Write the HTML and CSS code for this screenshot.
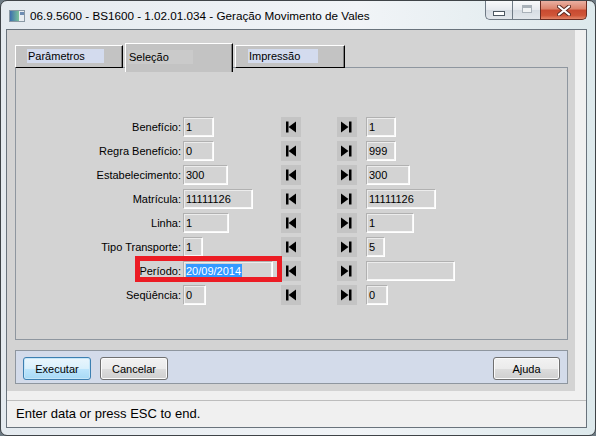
FILE: index.html
```html
<!DOCTYPE html>
<html lang="pt-BR">
<head>
    <meta charset="UTF-8">
    <title>Geração Movimento de Vales</title>
    <link rel="stylesheet" href="styles.css">
</head>
<body>

<div class="window">
    <div class="titlebar">
        <svg class="app-icon" width="16" height="12" viewBox="0 0 16 12">
            <defs>
                <linearGradient id="ico" x1="0" y1="0" x2="1" y2="0">
                    <stop offset="0" stop-color="#3d6fae"/>
                    <stop offset="1" stop-color="#7cc29a"/>
                </linearGradient>
            </defs>
            <rect x="0.5" y="0.5" width="15" height="11" fill="#e8edf1" stroke="#8a99a4"/>
            <rect x="1" y="1" width="9" height="10" fill="url(#ico)"/>
            <rect x="11" y="2" width="4" height="3" fill="#6d8db3"/>
        </svg>
        <span class="title">06.9.5600 - BS1600 - 1.02.01.034 - Geração Movimento de Vales</span>
        <div class="caption-btns">
            <div class="cap-btn cap-min"><span class="min-glyph"></span></div>
            <div class="cap-btn cap-max"><span class="max-glyph"></span></div>
            <div class="cap-btn cap-close">
                <svg width="14" height="11" viewBox="0 0 14 11">
                    <path d="M2 1.5 L12 9.5 M12 1.5 L2 9.5" stroke="#5a2a22" stroke-width="4" stroke-linecap="round"/>
                    <path d="M2 1.5 L12 9.5 M12 1.5 L2 9.5" stroke="#fff" stroke-width="2.2" stroke-linecap="round"/>
                </svg>
            </div>
        </div>
    </div>

    <div class="client">
        <div class="main">
            <div class="tabs">
                <div class="tab tab-param"><span class="tab-label">Parâmetros</span></div>
                <div class="tab active"><span class="tab-label">Seleção</span></div>
                <div class="tab tab-print"><span class="tab-label">Impressão</span></div>
            </div>

            <div class="panel">
                <div class="form">
                    <label>Benefício:</label>
                    <div><div class="field w31">1</div></div>
                    <div class="nav"><svg viewBox="0 0 20 20"><rect x="5" y="4.5" width="2.5" height="11"/><polygon points="15,4.5 7.5,10 15,15.5"/></svg></div>
                    <div class="nav"><svg viewBox="0 0 20 20"><polygon points="4,4.5 11.5,10 4,15.5"/><rect x="12" y="4.5" width="2.5" height="11"/></svg></div>
                    <div><div class="field w30">1</div></div>

                    <label>Regra Benefício:</label>
                    <div><div class="field w31">0</div></div>
                    <div class="nav"><svg viewBox="0 0 20 20"><rect x="5" y="4.5" width="2.5" height="11"/><polygon points="15,4.5 7.5,10 15,15.5"/></svg></div>
                    <div class="nav"><svg viewBox="0 0 20 20"><polygon points="4,4.5 11.5,10 4,15.5"/><rect x="12" y="4.5" width="2.5" height="11"/></svg></div>
                    <div><div class="field w30">999</div></div>

                    <label>Estabelecimento:</label>
                    <div><div class="field w45">300</div></div>
                    <div class="nav"><svg viewBox="0 0 20 20"><rect x="5" y="4.5" width="2.5" height="11"/><polygon points="15,4.5 7.5,10 15,15.5"/></svg></div>
                    <div class="nav"><svg viewBox="0 0 20 20"><polygon points="4,4.5 11.5,10 4,15.5"/><rect x="12" y="4.5" width="2.5" height="11"/></svg></div>
                    <div><div class="field w44">300</div></div>

                    <label>Matrícula:</label>
                    <div><div class="field w70">11111126</div></div>
                    <div class="nav"><svg viewBox="0 0 20 20"><rect x="5" y="4.5" width="2.5" height="11"/><polygon points="15,4.5 7.5,10 15,15.5"/></svg></div>
                    <div class="nav"><svg viewBox="0 0 20 20"><polygon points="4,4.5 11.5,10 4,15.5"/><rect x="12" y="4.5" width="2.5" height="11"/></svg></div>
                    <div><div class="field w70">11111126</div></div>

                    <label>Linha:</label>
                    <div><div class="field w46">1</div></div>
                    <div class="nav"><svg viewBox="0 0 20 20"><rect x="5" y="4.5" width="2.5" height="11"/><polygon points="15,4.5 7.5,10 15,15.5"/></svg></div>
                    <div class="nav"><svg viewBox="0 0 20 20"><polygon points="4,4.5 11.5,10 4,15.5"/><rect x="12" y="4.5" width="2.5" height="11"/></svg></div>
                    <div><div class="field w48">1</div></div>

                    <label>Tipo Transporte:</label>
                    <div><div class="field w20">1</div></div>
                    <div class="nav"><svg viewBox="0 0 20 20"><rect x="5" y="4.5" width="2.5" height="11"/><polygon points="15,4.5 7.5,10 15,15.5"/></svg></div>
                    <div class="nav"><svg viewBox="0 0 20 20"><polygon points="4,4.5 11.5,10 4,15.5"/><rect x="12" y="4.5" width="2.5" height="11"/></svg></div>
                    <div><div class="field w19">5</div></div>

                    <label>Período:</label>
                    <div><div class="field w90"><span class="selected">20/09/2014</span></div></div>
                    <div class="nav"><svg viewBox="0 0 20 20"><rect x="5" y="4.5" width="2.5" height="11"/><polygon points="15,4.5 7.5,10 15,15.5"/></svg></div>
                    <div class="nav"><svg viewBox="0 0 20 20"><polygon points="4,4.5 11.5,10 4,15.5"/><rect x="12" y="4.5" width="2.5" height="11"/></svg></div>
                    <div><div class="field w89"></div></div>

                    <label>Seqüência:</label>
                    <div><div class="field w23">0</div></div>
                    <div class="nav"><svg viewBox="0 0 20 20"><rect x="5" y="4.5" width="2.5" height="11"/><polygon points="15,4.5 7.5,10 15,15.5"/></svg></div>
                    <div class="nav"><svg viewBox="0 0 20 20"><polygon points="4,4.5 11.5,10 4,15.5"/><rect x="12" y="4.5" width="2.5" height="11"/></svg></div>
                    <div><div class="field w22">0</div></div>
                </div>

                <!-- red frame drawn over the Período row -->
                <div class="mark"></div>
            </div>

            <div class="button-bar">
                <button class="btn default">Executar</button>
                <button class="btn">Cancelar</button>
                <button class="btn help">Ajuda</button>
            </div>
        </div>

        <div class="statusbar">Enter data or press ESC to end.</div>
    </div>
</div>

</body>
</html>
```

FILE: styles.css
```css
* {
    box-sizing: border-box;
}
body {
    margin: 0;
    background: #6d7a83;
    font-family: "Liberation Sans", Arial, sans-serif;
    font-size: 11px;
    color: #000;
}
.window {
    width: 596px;
    height: 436px;
    border: 1px solid #3f4448;
    border-radius: 7px;
    background: linear-gradient(to right, #e4eaef, #f1f4f7 60%, #dde9ec);
    padding: 0 8px 7px 5px;
    display: flex;
    flex-direction: column;
}

/* title bar */
.titlebar {
    height: 28px;
    display: flex;
    align-items: flex-start;
}
.app-icon {
    margin: 9px 0 0 3px;
}
.title {
    margin: 8px 0 0 5px;
    font-size: 11.7px;
    line-height: 14px;
}
.caption-btns {
    margin-left: auto;
    display: flex;
    height: 19px;
}
.cap-btn {
    height: 19px;
    border: 1px solid #6f7a85;
    border-top: none;
    background: linear-gradient(#f8f9fb, #e6e9ee 50%, #d6dce3 50%, #e2e7ec);
    display: flex;
    align-items: center;
    justify-content: center;
}
.cap-min {
    width: 27px;
    border-right: none;
    border-radius: 0 0 0 5px;
}
.cap-max {
    width: 28px;
    border-right: none;
}
.cap-close {
    width: 47px;
    border-color: #6a2c22;
    border-radius: 0 0 5px 0;
    background: linear-gradient(#eab0a2, #dc826a 45%, #c84a31 50%, #cf5538 80%, #e3866a);
}
.min-glyph {
    width: 12px;
    height: 5px;
    margin-top: 6px;
    background: #fff;
    border: 1px solid #4d5862;
}
.max-glyph {
    width: 10px;
    height: 8px;
    margin-bottom: 2px;
    border: 1px solid #a9b1b9;
    box-shadow: inset 0 2px #a9b1b9;
    background: #f1f3f5;
}

/* client area */
.client {
    flex: 1;
    border: 1px solid #69737c;
    background: #f0f0f0;
    display: flex;
    flex-direction: column;
}
.main {
    width: 568px;
    height: 361px;
    background: #d3d3d3;
    padding: 13px 7px 7px 8px;
    display: flex;
    flex-direction: column;
}

/* tabs */
.tabs {
    display: flex;
    gap: 2px;
    height: 24px;
    align-items: flex-end;
    position: relative;
    z-index: 1;
}
.tab {
    width: 108px;
    height: 23px;
    margin-bottom: -1px;
    background: #c3c3c3;
    border-top: 1px solid #fff;
    border-left: 1px solid #fff;
    border-right: 1px solid #000;
    border-bottom: 1px solid #000;
    box-shadow: inset -1px 0 #808080;
    padding: 3px 0 0 11px;
}
.tab-label {
    display: block;
    height: 14px;
    line-height: 14px;
    padding-left: 1px;
    background: #d3dbee;
}
.tab-param .tab-label {
    width: 77px;
}
.tab.active {
    height: 29px;
    margin-bottom: -5px;
    border-bottom: none;
    padding: 6px 0 0 2px;
}
.tab.active .tab-label {
    width: 65px;
    background: #cacaca;
}
.tab-print {
    width: 110px;
    padding-left: 12px;
}
.tab-print .tab-label {
    width: 70px;
}

.panel {
    position: relative;
    height: 273px;
    border: 1px solid #8e969f;
    padding-top: 49px;
}

/* selection form */
.form {
    display: grid;
    grid-template-columns: 167px 98px 56px 29px 1fr;
    grid-auto-rows: 20px;
    row-gap: 4px;
}
.form label {
    text-align: right;
    padding-right: 2px;
    line-height: 20px;
}
.field {
    height: 20px;
    border: 1px solid;
    border-color: #b1b1b1 #fff #fff #b1b1b1;
    box-shadow: inset -1px -1px #f7f7f7, inset 1px 1px #ececec;
    padding-left: 2px;
    line-height: 18px;
    white-space: nowrap;
    overflow: hidden;
}
.w19 { width: 19px; }
.w20 { width: 20px; }
.w22 { width: 22px; }
.w23 { width: 23px; }
.w30 { width: 30px; }
.w31 { width: 31px; }
.w44 { width: 44px; }
.w45 { width: 45px; }
.w46 { width: 46px; }
.w48 { width: 48px; }
.w70 { width: 70px; }
.w89 { width: 89px; }
.w90 { width: 90px; }
.selected {
    display: inline-block;
    background: #3399ff;
    color: #fff;
    line-height: 14px;
    padding-right: 1px;
}
.nav {
    width: 20px;
    height: 20px;
    background: #c4c4c4;
}
.nav svg {
    display: block;
    width: 20px;
    height: 20px;
    fill: #000;
}
.mark {
    position: absolute;
    left: 119px;
    top: 188px;
    width: 147px;
    height: 26px;
    border: 5px solid #ec1c24;
}

/* bottom buttons */
.button-bar {
    margin-top: 10px;
    height: 34px;
    border: 1px solid #8e969f;
    background: #d3dbea;
    display: flex;
    gap: 9px;
    padding: 6px 7px 0 7px;
}
.btn {
    width: 68px;
    height: 23px;
    border: 1px solid #707070;
    border-radius: 3px;
    background: linear-gradient(#f2f2f2, #ebebeb 50%, #dddddd 50%, #cfcfcf);
    box-shadow: inset 0 0 0 1px #fbfbfb;
    font-family: "Liberation Sans", Arial, sans-serif;
    font-size: 11px;
    color: #000;
    padding: 0;
}
.btn.default {
    border-color: #3c7fb1;
    background: linear-gradient(#eaf6fd, #d9f0fc 50%, #bee6fd 50%, #a7d9f5);
    box-shadow: inset 0 0 0 1px #c6e6f8;
}
.btn.help {
    margin-left: auto;
    width: 67px;
}

.statusbar {
    margin-top: 9px;
    border-top: 1px solid #bdbdbd;
    flex: 1;
    padding-left: 9px;
    font-size: 13px;
    line-height: 26px;
}
```
